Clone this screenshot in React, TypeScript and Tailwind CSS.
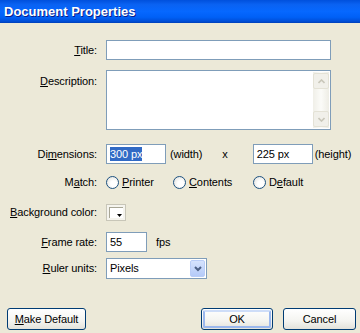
import React from 'react';

const font = { fontFamily: '"Liberation Sans", Arial, sans-serif' };

function Label({ children, className = '' }: { children: React.ReactNode; className?: string }) {
  return <div className={`w-[97px] shrink-0 text-right ${className}`}>{children}</div>;
}

function TextBox({ value, className = '', selected = false }: { value: string; className?: string; selected?: boolean }) {
  return (
    <div className={`h-5 border border-[#7F9DB9] bg-white flex items-center px-[3px] ${className}`}>
      {selected ? <span className="bg-[#316AC5] text-white leading-[14px]">{value}</span> : <span>{value}</span>}
    </div>
  );
}

function Radio({ u, rest, pre = '' }: { u: string; rest: string; pre?: string }) {
  return (
    <div className="flex items-center gap-[3px]">
      <div className="w-[13px] h-[13px] rounded-full border border-[#1C5180] bg-[radial-gradient(circle_at_60%_60%,#ffffff_30%,#DCDCD6_100%)]" />
      <span>
        {pre}
        <span className="underline">{u}</span>
        {rest}
      </span>
    </div>
  );
}

function XpButton({ children, focused = false, className = '' }: { children: React.ReactNode; focused?: boolean; className?: string }) {
  return (
    <div
      className={`h-[22px] rounded-[3px] border border-[#003C74] bg-[linear-gradient(to_bottom,#FFFFFF_0%,#F4F4F0_60%,#E3E2DA_100%)] p-px ${className}`}
    >
      <div
        className={`h-full w-full rounded-[2px] flex items-center justify-center ${
          focused ? 'border-2 border-[#9BB8EE] border-t-[#CEDDF8]' : ''
        }`}
      >
        {children}
      </div>
    </div>
  );
}

export default function App() {
  return (
    <div style={font} className="w-[360px] h-[333px] bg-[#ECE9D8] text-[11px] text-black overflow-hidden flex flex-col tracking-[-0.1px]">
      <div className="h-[23px] shrink-0 bg-[linear-gradient(to_bottom,#0050DC_0%,#0A62F2_20%,#0668FF_50%,#0060F6_75%,#004FD8_92%,#003FB8_100%)] flex items-center px-1">
        <span className="text-white font-bold text-[13px] tracking-normal [text-shadow:1px_1px_0_#0A1E8A]">Document Properties</span>
      </div>

      <div className="flex flex-col">
        <div className="flex items-center gap-[9px] mt-[17px] h-5">
          <Label>
            <span className="underline">T</span>itle:
          </Label>
          <TextBox value="" className="w-[225px]" />
        </div>

        <div className="flex items-start gap-[9px] mt-[10px]">
          <Label className="pt-[3px]">
            <span className="underline">D</span>escription:
          </Label>
          <div className="w-[225px] h-[60px] border border-[#7F9DB9] bg-white flex justify-end p-px">
            <div className="w-4 flex flex-col justify-between bg-[linear-gradient(to_right,#F0EFE8,#FBFBF8,#EEEDE5)] py-px">
              <div className="h-4 rounded-[2px] border border-[#E4E2D6] bg-[#F1F0EA] flex items-center justify-center">
                <svg width="7" height="5" viewBox="0 0 7 5">
                  <path d="M0.5 4 L3.5 1 L6.5 4" stroke="#C9C7BA" strokeWidth="1.6" fill="none" />
                </svg>
              </div>
              <div className="h-4 rounded-[2px] border border-[#E4E2D6] bg-[#F1F0EA] flex items-center justify-center">
                <svg width="7" height="5" viewBox="0 0 7 5">
                  <path d="M0.5 1 L3.5 4 L6.5 1" stroke="#C9C7BA" strokeWidth="1.6" fill="none" />
                </svg>
              </div>
            </div>
          </div>
        </div>

        <div className="flex items-center gap-[9px] mt-[14px] h-5">
          <Label>
            Di<span className="underline">m</span>ensions:
          </Label>
          <TextBox value="300 px" selected className="w-[60px]" />
          <span className="ml-[-5px]">(width)</span>
          <span className="ml-[11px]">x</span>
          <TextBox value="225 px" className="w-[60px] ml-[16px]" />
          <span className="ml-[-7px]">(height)</span>
        </div>

        <div className="flex items-center gap-[9px] mt-2 h-5">
          <Label>
            M<span className="underline">a</span>tch:
          </Label>
          <div className="flex items-center">
            <div className="w-[67px]">
              <Radio u="P" rest="rinter" />
            </div>
            <div className="w-[80px]">
              <Radio u="C" rest="ontents" />
            </div>
            <Radio pre="D" u="e" rest="fault" />
          </div>
        </div>

        <div className="flex items-center gap-[9px] mt-[10px] h-5">
          <Label>
            <span className="underline">B</span>ackground color:
          </Label>
          <div className="w-5 h-[17px] border border-[#C8C6B8] bg-[#F5F4EE] p-[2px]">
            <div className="h-full w-full bg-white border-t border-l border-[#A8A696] relative">
              <svg className="absolute right-0 bottom-0" width="6" height="4" viewBox="0 0 6 4">
                <path d="M0 0 H5 L2.5 3 Z" fill="#000" />
              </svg>
            </div>
          </div>
        </div>

        <div className="flex items-center gap-[9px] mt-[10px] h-5">
          <Label>
            <span className="underline">F</span>rame rate:
          </Label>
          <TextBox value="55" className="w-[41px]" />
          <span>fps</span>
        </div>

        <div className="flex items-center gap-[9px] mt-[6px] h-[21px]">
          <Label>
            <span className="underline">R</span>uler units:
          </Label>
          <div className="w-[101px] h-[21px] border border-[#7F9DB9] bg-white flex items-center">
            <span className="flex-1 pl-[3px]">Pixels</span>
            <div className="w-[15px] h-[17px] mr-px rounded-[2px] border border-[#B9CDF7] bg-[linear-gradient(to_bottom,#D6E3FD,#B4CAF8)] flex items-center justify-center">
              <svg width="8" height="6" viewBox="0 0 8 6">
                <path d="M1 1 L4 4 L7 1" stroke="#4D6185" strokeWidth="2" fill="none" />
              </svg>
            </div>
          </div>
        </div>

        <div className="flex items-center mt-[29px] px-[7px]">
          <XpButton className="w-[79px]">
            <span>
              <span className="underline">M</span>ake Default
            </span>
          </XpButton>
          <XpButton focused className="w-[72px] ml-auto">
            OK
          </XpButton>
          <XpButton className="w-[73px] ml-[10px] mr-[-3px]">Cancel</XpButton>
        </div>
      </div>
    </div>
  );
}
